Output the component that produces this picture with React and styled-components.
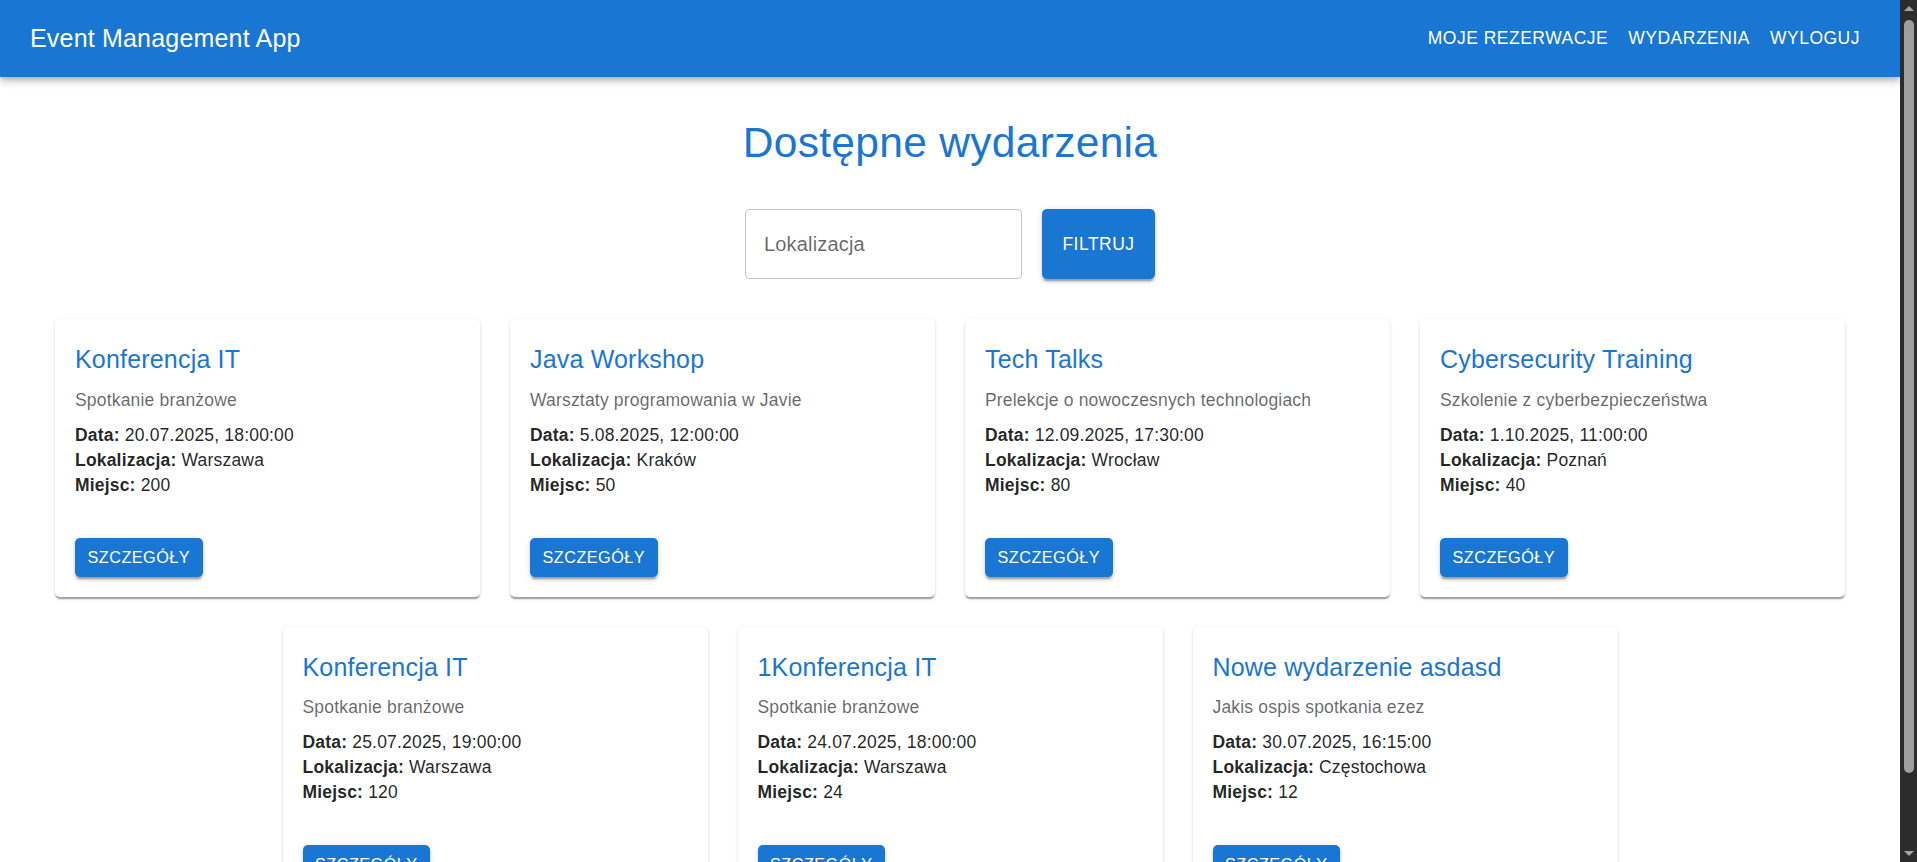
import React from "react";
import styled, { createGlobalStyle } from "styled-components";

const PRIMARY = "#1976d2";

const GlobalStyle = createGlobalStyle`
  html, body {
    margin: 0;
    padding: 0;
    background: #fff;
  }
  body {
    font-family: "Liberation Sans", Arial, sans-serif;
    color: rgba(0, 0, 0, 0.87);
  }
  * {
    box-sizing: border-box;
  }
`;

const Shell = styled.div`
  display: flex;
  align-items: flex-start;
`;

const Page = styled.div`
  flex: 1;
  min-width: 0;
`;

/* window scrollbar as it shows in the screenshot (dark Windows style) */
const ScrollBar = styled.aside`
  position: sticky;
  top: 0;
  width: 17px;
  height: 100vh;
  flex-shrink: 0;
  background: #2c2c2c;
  display: flex;
  flex-direction: column;
`;

const ScrollArrow = styled.div`
  height: 17px;
  display: flex;
  align-items: center;
  justify-content: center;

  &::before {
    content: "";
    width: 0;
    height: 0;
    border-left: 5px solid transparent;
    border-right: 5px solid transparent;
    ${(p) =>
      p.$down
        ? "border-top: 5px solid #a3a3a3;"
        : "border-bottom: 5px solid #a3a3a3;"}
  }
`;

const ScrollTrack = styled.div`
  flex: 1;
  padding: 3px 3px 0 4px;
`;

const ScrollThumb = styled.div`
  height: 753px;
  border-radius: 5px;
  background: #9f9f9f;
`;

const AppBar = styled.header`
  height: 76.8px;
  display: flex;
  align-items: center;
  justify-content: space-between;
  padding: 0 30px;
  background: ${PRIMARY};
  color: #fff;
  box-shadow: 0px 2.5px 5px -1.25px rgba(0, 0, 0, 0.2),
    0px 5px 6.25px 0px rgba(0, 0, 0, 0.14),
    0px 1.25px 12.5px 0px rgba(0, 0, 0, 0.12);
`;

const Brand = styled.div`
  font-size: 25px;
  line-height: 1.6;
  letter-spacing: 0.0075em;
  font-weight: 400;
`;

const Nav = styled.nav`
  display: flex;
  align-items: center;
`;

const NavButton = styled.button`
  border: 0;
  background: transparent;
  color: inherit;
  font-family: inherit;
  font-size: 17.5px;
  line-height: 1.75;
  letter-spacing: 0.02857em;
  text-transform: uppercase;
  padding: 7.5px 10px;
  min-width: 80px;
  border-radius: 5px;
  cursor: pointer;
`;

const Main = styled.main`
  display: flex;
  flex-direction: column;
  align-items: center;
  padding: 40px 30px 40px;
`;

const PageTitle = styled.h1`
  margin: 0 0 40px;
  font-size: 42.5px;
  line-height: 1.235;
  letter-spacing: 0.00735em;
  font-weight: 400;
  color: ${PRIMARY};
  text-align: center;
`;

const FilterRow = styled.div`
  display: flex;
  align-items: stretch;
  gap: 20px;
  margin-bottom: 40px;
`;

const LocationInput = styled.input`
  width: 277px;
  height: 70px;
  padding: 0 17.5px;
  border: 1px solid rgba(0, 0, 0, 0.23);
  border-radius: 5px;
  font-family: inherit;
  font-size: 20px;
  letter-spacing: 0.00938em;
  color: rgba(0, 0, 0, 0.87);
  outline: none;

  &::placeholder {
    color: rgba(0, 0, 0, 0.6);
    opacity: 1;
  }
`;

const ContainedButton = styled.button`
  border: 0;
  border-radius: 5px;
  background: ${PRIMARY};
  color: #fff;
  font-family: inherit;
  font-size: ${(p) => (p.$small ? "16.25px" : "17.5px")};
  line-height: 1.75;
  letter-spacing: 0.02857em;
  text-transform: uppercase;
  padding: ${(p) => (p.$small ? "5px 12.5px" : "7.5px 20px")};
  min-width: 80px;
  cursor: pointer;
  box-shadow: 0px 3.75px 1.25px -2.5px rgba(0, 0, 0, 0.2),
    0px 2.5px 2.5px 0px rgba(0, 0, 0, 0.14),
    0px 1.25px 6.25px 0px rgba(0, 0, 0, 0.12);
`;

const CardGrid = styled.div`
  display: flex;
  flex-wrap: wrap;
  justify-content: center;
  gap: 30px;
`;

const Card = styled.article`
  width: 425px;
  background: #fff;
  border-radius: 5px;
  display: flex;
  flex-direction: column;
  box-shadow: 0px 2.5px 1.25px -1.25px rgba(0, 0, 0, 0.2),
    0px 1.25px 1.25px 0px rgba(0, 0, 0, 0.14),
    0px 1.25px 3.75px 0px rgba(0, 0, 0, 0.12);
`;

const CardBody = styled.div`
  padding: 20px 20px 30px;
`;

const CardTitle = styled.h2`
  margin: 0 0 0.35em;
  font-size: 25px;
  line-height: 1.6;
  letter-spacing: 0.0075em;
  font-weight: 400;
  color: ${PRIMARY};
`;

const Text = styled.p`
  margin: 0 0 ${(p) => (p.$gap ? "10px" : "0")};
  font-size: 17.5px;
  line-height: 1.43;
  letter-spacing: 0.01071em;
  color: ${(p) => (p.$muted ? "rgba(0, 0, 0, 0.6)" : "rgba(0, 0, 0, 0.87)")};

  strong {
    font-weight: 700;
  }
`;

const CardActions = styled.div`
  display: flex;
  padding: 10px 20px 20px;
`;

const events = [
  {
    title: "Konferencja IT",
    desc: "Spotkanie branżowe",
    date: "20.07.2025, 18:00:00",
    place: "Warszawa",
    seats: 200,
  },
  {
    title: "Java Workshop",
    desc: "Warsztaty programowania w Javie",
    date: "5.08.2025, 12:00:00",
    place: "Kraków",
    seats: 50,
  },
  {
    title: "Tech Talks",
    desc: "Prelekcje o nowoczesnych technologiach",
    date: "12.09.2025, 17:30:00",
    place: "Wrocław",
    seats: 80,
  },
  {
    title: "Cybersecurity Training",
    desc: "Szkolenie z cyberbezpieczeństwa",
    date: "1.10.2025, 11:00:00",
    place: "Poznań",
    seats: 40,
  },
  {
    title: "Konferencja IT",
    desc: "Spotkanie branżowe",
    date: "25.07.2025, 19:00:00",
    place: "Warszawa",
    seats: 120,
  },
  {
    title: "1Konferencja IT",
    desc: "Spotkanie branżowe",
    date: "24.07.2025, 18:00:00",
    place: "Warszawa",
    seats: 24,
  },
  {
    title: "Nowe wydarzenie asdasd",
    desc: "Jakis ospis spotkania ezez",
    date: "30.07.2025, 16:15:00",
    place: "Częstochowa",
    seats: 12,
  },
];

const EventCard = ({ event }) => (
  <Card>
    <CardBody>
      <CardTitle>{event.title}</CardTitle>
      <Text $muted $gap>
        {event.desc}
      </Text>
      <Text>
        <strong>Data:</strong> {event.date}
      </Text>
      <Text>
        <strong>Lokalizacja:</strong> {event.place}
      </Text>
      <Text>
        <strong>Miejsc:</strong> {event.seats}
      </Text>
    </CardBody>
    <CardActions>
      <ContainedButton $small>Szczegóły</ContainedButton>
    </CardActions>
  </Card>
);

export default function App() {
  return (
    <Shell>
      <GlobalStyle />
      <Page>
        <AppBar>
          <Brand>Event Management App</Brand>
          <Nav>
            <NavButton>Moje rezerwacje</NavButton>
            <NavButton>Wydarzenia</NavButton>
            <NavButton>Wyloguj</NavButton>
          </Nav>
        </AppBar>
        <Main>
          <PageTitle>Dostępne wydarzenia</PageTitle>
          <FilterRow>
            <LocationInput placeholder="Lokalizacja" />
            <ContainedButton>Filtruj</ContainedButton>
          </FilterRow>
          <CardGrid>
            {events.map((e, i) => (
              <EventCard key={i} event={e} />
            ))}
          </CardGrid>
        </Main>
      </Page>
      <ScrollBar>
        <ScrollArrow />
        <ScrollTrack>
          <ScrollThumb />
        </ScrollTrack>
        <ScrollArrow $down />
      </ScrollBar>
    </Shell>
  );
}
